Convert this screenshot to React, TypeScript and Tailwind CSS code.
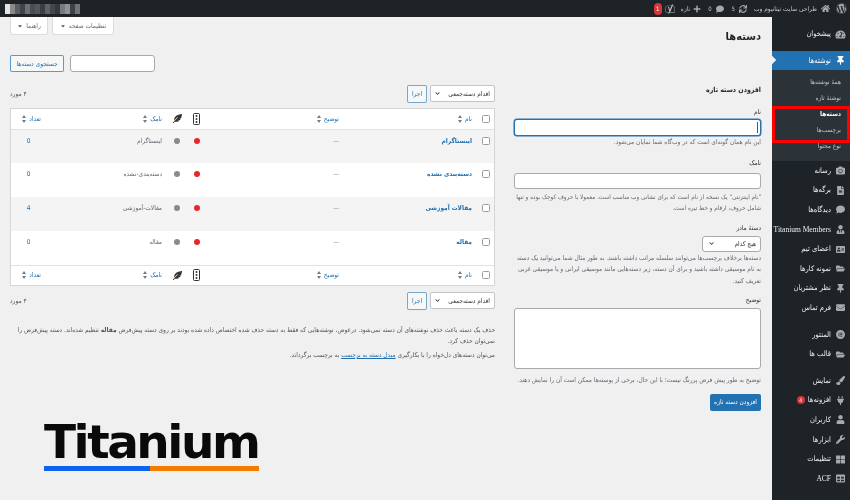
import React from "react";
import {
  FaWordpress, FaHome, FaComment, FaPlus, FaYoast, FaThumbtack, FaTachometerAlt, FaFileAlt,
  FaUserTie, FaFolderOpen, FaEnvelope, FaPaintBrush, FaPlug, FaUser, FaWrench, FaFeatherAlt, FaCaretDown, FaChevronDown,
  FaCamera, FaTable, FaThLarge, FaSync, FaAddressCard,
} from "react-icons/fa";
import { SiElementor } from "react-icons/si";

const font = "[font-family:'DejaVu_Sans_Condensed','DejaVu_Sans',sans-serif]";

type MenuItem = { label: string; icon: React.ReactNode; mt: string; badge?: boolean; latin?: boolean };

const topMenu: MenuItem[] = [
  { label: "رسانه", icon: <FaCamera />, mt: "mt-0" },
  { label: "برگه‌ها", icon: <FaFileAlt />, mt: "mt-0" },
  { label: "دیدگاه‌ها", icon: <FaComment />, mt: "mt-0" },
  { label: "Titanium Members", icon: <FaUserTie />, mt: "mt-0", latin: true },
  { label: "اعضای تیم", icon: <FaAddressCard />, mt: "mt-0" },
  { label: "نمونه کارها", icon: <FaFolderOpen />, mt: "mt-0" },
  { label: "نظر مشتریان", icon: <FaThumbtack />, mt: "mt-0" },
  { label: "فرم تماس", icon: <FaEnvelope />, mt: "mt-0" },
  { label: "المنتور", icon: <SiElementor />, mt: "mt-[7px]" },
  { label: "قالب ها", icon: <FaFolderOpen />, mt: "mt-0" },
  { label: "نمایش", icon: <FaPaintBrush />, mt: "mt-[7px]" },
  { label: "افزونه‌ها", icon: <FaPlug />, mt: "mt-0", badge: true },
  { label: "کاربران", icon: <FaUser />, mt: "mt-0" },
  { label: "ابزارها", icon: <FaWrench />, mt: "mt-0" },
  { label: "تنظیمات", icon: <FaThLarge />, mt: "mt-0" },
  { label: "ACF", icon: <FaTable />, mt: "mt-0", latin: true },
];

const rows = [
  { name: "اینستاگرام", slug: "اینستاگرام", count: "0", bg: "bg-[#f4f4f5]" },
  { name: "دسته‌بندی نشده", slug: "دسته‌بندی-نشده", count: "0", bg: "bg-white" },
  { name: "مقالات آموزشی", slug: "مقالات-آموزشی", count: "4", bg: "bg-[#f4f4f5]" },
  { name: "مقاله", slug: "مقاله", count: "0", bg: "bg-white" },
];

function Traffic() {
  return (
    <svg width="7" height="12" viewBox="0 0 7 12" className="inline-block align-middle">
      <rect x="0.5" y="0.5" width="6" height="11" rx="1" fill="none" stroke="#333" />
      <circle cx="3.5" cy="3" r="1" fill="#333" />
      <circle cx="3.5" cy="6" r="1" fill="#333" />
      <circle cx="3.5" cy="9" r="1" fill="#333" />
    </svg>
  );
}

function Sort() {
  return (
    <svg width="4" height="8" viewBox="0 0 4 8" className="inline-block mx-[3px] align-middle">
      <path d="M2 0L4 3H0Z M2 8L0 5H4Z" fill="#787c82" />
    </svg>
  );
}

function Check() {
  return <span className="block mx-auto w-[8px] h-[8px] rounded-[1.5px] border border-[#9a9ea3] bg-white" />;
}

function HeadRow() {
  const th = "h-[20px] font-normal text-right text-[#2271b1] pr-[5px] align-middle";
  return (
    <tr className="bg-white">
      <th className="font-normal align-middle"><Check /></th>
      <th className={th}>نام<Sort /></th>
      <th className={th}>توضیح<Sort /></th>
      <th className="text-center align-middle"><Traffic /></th>
      <th className="text-center align-middle"><FaFeatherAlt className="inline-block text-[9px] text-[#333]" /></th>
      <th className={th}>نامک<Sort /></th>
      <th className={th}>تعداد<Sort /></th>
    </tr>
  );
}

function Bulk() {
  return (
    <div className="flex gap-[3px]">
      <div className="w-[65px] h-[17px] bg-white border border-[#c3c4c7] rounded-[2px] flex items-center justify-between px-[4px] text-[#2c3338] whitespace-nowrap">
        <span>اقدام دسته‌جمعی</span>
        <FaChevronDown className="text-[5px]" />
      </div>
      <div className="w-[20px] h-[18px] bg-[#f6f7f7] border border-[#2271b1]/60 rounded-[2px] flex items-center justify-center text-[#2271b1]">اجرا</div>
    </div>
  );
}

function TopBar() {
  return (
    <div className="h-[17px] shrink-0 bg-[#1d2327] flex items-center text-[#c3c4c7]">
      <div className="w-[17px] flex justify-center"><FaWordpress className="text-[11px] text-[#a7aaad]" /></div>
      <FaHome className="mr-[3px] text-[9px] text-[#a7aaad]" />
      <span className="mr-[4px] w-[63px] whitespace-nowrap">طراحی سایت تیتانیوم وب</span>
      <FaSync className="mr-[7px] text-[8px] text-[#a7aaad]" />
      <span className="mr-[4px] text-[6px]">5</span>
      <FaComment className="mr-[8px] text-[8px] text-[#a7aaad]" />
      <span className="mr-[4px] text-[6px]">0</span>
      <FaPlus className="mr-[7px] text-[8px] text-[#a7aaad]" />
      <span className="mr-[3px]">تازه</span>
      <FaYoast className="mr-[6px] text-[10px] text-[#c3c4c7]" />
      <span className="mr-[3px] w-[8px] h-[12px] rounded-full bg-[#d63638] text-white text-[6px] flex items-center justify-center">1</span>
      <div className="mr-auto ml-[5px] flex items-center" dir="ltr">
        {["#e5e5e5", "#8a8a8a", "#5a5e62", "#3f4448", "#6d7074", "#4a4e52", "#54585c", "#3a3f43", "#5f6367", "#43484c", "#34393d", "#777b7f", "#8f9296", "#3d4246", "#6f7276"].map((c, i) => (
          <span key={i} className="w-[5px] h-[10px]" style={{ background: c }} />
        ))}
      </div>
    </div>
  );
}

function Sidebar() {
  const sub = "h-[16px] flex items-center pr-[9px] text-[#c3c4c7]";
  return (
    <aside className="w-[78px] shrink-0 bg-[#1d2327] text-[#f0f0f1] text-[7.5px]">
      <div className="h-[34px] flex items-center">
        <FaTachometerAlt className="w-[19px] text-[9px] text-[#a7aaad]" />
        <span>پیشخوان</span>
      </div>
      <div className="relative h-[19px] bg-[#2271b1] flex items-center text-white">
        <FaThumbtack className="w-[19px] text-[9px]" />
        <span>نوشته‌ها</span>
        <span className="absolute left-[-3px] top-[6px] w-[6px] h-[6px] rotate-45 bg-[#f0f0f1]" />
      </div>
      <div className="relative h-[91px] bg-[#2c3338] pt-[4px] text-[6.5px]">
        <div className={sub}>همهٔ نوشته‌ها</div>
        <div className={sub}>نوشتهٔ تازه</div>
        <div className={sub + " font-bold text-white"}>دسته‌ها</div>
        <div className={sub}>برچسب‌ها</div>
        <div className={sub}>نوع محتوا</div>
        <span className="absolute left-0 right-0 top-[36px] h-[37px] border-[3px] border-[#ff0000]" />
      </div>
      {topMenu.map((m) => (
        <div key={m.label} className={"h-[19.6px] flex items-center " + m.mt}>
          <span className="w-[19px] flex justify-center text-[9px] text-[#a7aaad] shrink-0">{m.icon}</span>
          <span className={m.latin ? "text-[7.5px] whitespace-nowrap [font-family:'Liberation_Serif',serif]" : "whitespace-nowrap"}>{m.label}</span>
          {m.badge && (
            <span className="mr-[3px] w-[8px] h-[8px] rounded-full bg-[#d63638] text-white text-[5px] flex items-center justify-center">4</span>
          )}
        </div>
      ))}
    </aside>
  );
}

function Form() {
  const label = "h-[10px] leading-[10px] text-[#2c3338]";
  const hint = "leading-[11.5px] text-[#646970]";
  return (
    <div className="w-[247px] shrink-0 pt-[12px]">
      <h2 className="h-[12px] leading-[12px] text-[7px] font-bold text-[#1d2327]">افزودن دسته تازه</h2>
      <div className={label + " mt-[11px]"}>نام</div>
      <div className="mt-[2px] h-[17px] bg-white border border-[#2271b1] rounded-[3px] shadow-[0_0_0_0.5px_#2271b1] flex items-center pr-[2px]">
        <span className="w-px h-[11px] bg-[#50575e]" />
      </div>
      <p className={hint + " mt-px"}>این نام همان گونه‌ای است که در وب‌گاه شما نمایان می‌شود.</p>
      <div className={label + " mt-[9px]"}>نامک</div>
      <div className="mt-[5px] h-[16px] bg-white border border-[#a7aaad] rounded-[3px]" />
      <p className={hint + " mt-[2px] text-[6.3px]"}>"نام اینترنتی" یک نسخه از نام است که برای نشانی وب مناسب است. معمولا با حروف کوچک بوده و تنها شامل حروف، ارقام و خط تیره است.</p>
      <div className={label + " mt-[9px]"}>دستهٔ مادر</div>
      <div className="mt-[3px] w-[59px] h-[16px] bg-white border border-[#a7aaad] rounded-[3px] flex items-center justify-between px-[4px] text-[#2c3338]">
        <span>هیچ کدام</span>
        <FaChevronDown className="text-[5px] ml-[2px]" />
      </div>
      <p className={hint + " mt-px"}>دسته‌ها برخلاف برچسب‌ها می‌توانند سلسله مراتب داشته باشند. به طور مثال شما می‌توانید یک دسته به نام موسیقی داشته باشید و برای آن دسته، زیر دسته‌هایی مانند موسیقی ایرانی و یا موسیقی غربی تعریف کنید.</p>
      <div className={label + " mt-[8px]"}>توضیح</div>
      <div className="mt-[3px] h-[61px] bg-white border border-[#a7aaad] rounded-[3px]" />
      <p className={hint + " mt-[6px] whitespace-nowrap"}>توضیح به طور پیش فرض پررنگ نیست؛ با این حال، برخی از پوسته‌ها ممکن است آن را نمایش دهند.</p>
      <div className="mt-[7px] w-[51px] h-[17px] bg-[#2271b1] rounded-[2px] flex items-center justify-center text-white whitespace-nowrap">افزودن دسته تازه</div>
    </div>
  );
}

function List() {
  const td = "align-top pt-[6px] pr-[5px] text-right";
  return (
    <div className="w-[485px] shrink-0 pt-[13px]">
      <div className="flex items-center justify-between h-[18px]">
        <Bulk />
        <span className="text-[#50575e]">۴ مورد</span>
      </div>
      <div className="mt-[5px] border border-[#d5d6d8]">
        <table className="w-full table-fixed border-collapse">
          <colgroup>
            <col className="w-[17px]" />
            <col className="w-[133px]" />
            <col className="w-[138px]" />
            <col className="w-[19px]" />
            <col className="w-[20px]" />
            <col className="w-[121px]" />
            <col />
          </colgroup>
          <thead className="border-b border-[#e2e2e4]"><HeadRow /></thead>
          <tbody>
            {rows.map((r) => (
              <tr key={r.name} className={r.bg + " h-[34px]"}>
                <td className="align-top pt-[7px]"><Check /></td>
                <td className={td + " font-bold text-[#2271b1]"}>{r.name}</td>
                <td className={td + " text-[#8c8f94]"}>—</td>
                <td className="align-top pt-[8px] text-center"><span className="block mx-auto w-[6px] h-[6px] rounded-full bg-[#e8272c]" /></td>
                <td className="align-top pt-[8px] text-center"><span className="block mx-auto w-[6px] h-[6px] rounded-full bg-[#8a8a8a]" /></td>
                <td className={td + " text-[#646970]"}>{r.slug}</td>
                <td className="align-top pt-[6px] text-center text-[#2271b1]">{r.count}</td>
              </tr>
            ))}
          </tbody>
          <tfoot className="border-t border-[#e2e2e4]"><HeadRow /></tfoot>
        </table>
      </div>
      <div className="mt-[6px] flex items-center justify-between h-[18px]">
        <Bulk />
        <span className="text-[#50575e]">۴ مورد</span>
      </div>
      <p className="mt-[15px] leading-[11px] text-[#50575e]">
        حذف یک دسته باعث حذف نوشته‌های آن دسته نمی‌شود. درعوض، نوشته‌هایی که فقط به دسته حذف شده اختصاص داده شده بودند بر روی دسته پیش‌فرض <b>مقاله</b> تنظیم شده‌اند. دسته پیش‌فرض را نمی‌توان حذف کرد.
      </p>
      <p className="mt-[3px] leading-[11px] text-[#50575e]">
        می‌توان دسته‌های دل‌خواه را با بکارگیری <span className="underline text-[#2271b1]">مبدل دسته به برچسب</span> به برچسب برگرداند.
      </p>
    </div>
  );
}

export default function App() {
  return (
    <div dir="rtl" className={"relative w-[850px] h-[500px] overflow-hidden flex flex-col bg-[#f0f0f1] text-[6.5px] leading-[10px] blur-[0.3px] " + font}>
      <TopBar />
      <div className="flex flex-1 min-h-0">
        <Sidebar />
        <main className="flex-1 min-w-0 pr-[11px] pl-[10px]">
          <div className="flex justify-between items-start h-[38px]">
            <h1 className="mt-[10px] text-[11px] leading-[20px] font-bold text-[#1d2327]">دسته‌ها</h1>
            <div className="flex gap-[4px]">
              <div className="w-[62px] h-[18px] bg-white border border-t-0 border-[#dcdcde] rounded-b-[3px] flex items-center justify-center gap-[3px] text-[#646970]">
                تنظیمات صفحه <FaCaretDown className="text-[6px] text-[#50575e]" />
              </div>
              <div className="w-[38px] h-[18px] bg-white border border-t-0 border-[#dcdcde] rounded-b-[3px] flex items-center justify-center gap-[3px] text-[#646970]">
                راهنما <FaCaretDown className="text-[6px] text-[#50575e]" />
              </div>
            </div>
          </div>
          <div className="flex justify-end gap-[6px] h-[17px]">
            <div className="w-[85px] h-[17px] bg-white border border-[#a7aaad] rounded-[3px]" />
            <div className="w-[54px] h-[17px] bg-[#f6f7f7] border border-[#2271b1]/70 rounded-[2px] flex items-center justify-center text-[#2271b1]">جستجوی دسته‌ها</div>
          </div>
          <div className="flex gap-[19px]">
            <Form />
            <List />
          </div>
        </main>
      </div>
      <div dir="ltr" className="absolute left-[44px] top-[418px] w-[215px]">
        <div className="text-[47px] leading-[48px] font-bold tracking-[-2.5px] text-[#0a0a0a] whitespace-nowrap [font-family:'DejaVu_Sans',sans-serif]">Titanium</div>
        <div className="flex h-[5px]">
          <span className="w-[106px] bg-[#0f62f0]" />
          <span className="flex-1 bg-[#f57c00]" />
        </div>
      </div>
    </div>
  );
}
